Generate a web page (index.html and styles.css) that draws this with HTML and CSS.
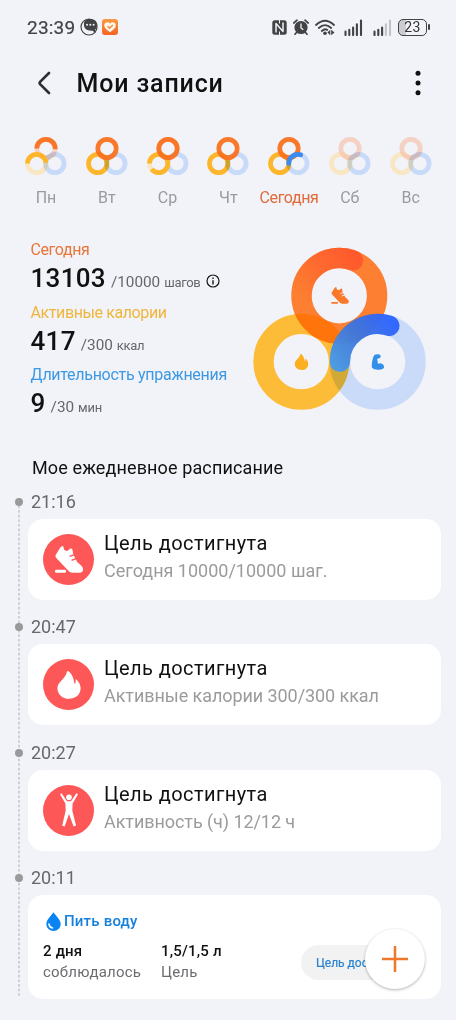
FILE: index.html
```html
<!DOCTYPE html>
<html lang="ru">
<head>
<meta charset="utf-8">
<title>Мои записи</title>
<link rel="stylesheet" href="styles.css">
</head>
<body>
<svg class="defs" width="0" height="0">
  <defs>
    <symbol id="shoe" viewBox="0 0 28 27">
      <path d="M.7 9 5.300 1.600Q6 .6 7.500 0 8.300 0 8.500 1L9 3.600Q10.500 5.200 12.500 4.800 14 4 15.200 2.600 17 2 17.400 3.600L18.300 8.200 14.300 9.800 14.800 11 19 9.500 20.100 12.200 16.300 13.800 16.800 15 21 13.500 22.200 16 26.400 19.800Q28.300 21.800 28 24 27.500 26.700 24.500 26.800L17.500 26.700Q15 26.600 13.400 24.800L1.300 12Q0 10.500.7 9Z"/>
      <rect x="0" y="23.700" width="11" height="3" rx="1.200"/>
    </symbol>
    <symbol id="flame" viewBox="0 0 24 28">
      <path d="M11.600.3C13.800 2 16.500 5.500 17.200 11.500 17.400 13.300 18.300 13.200 18.500 11.800L18.800 8C22.300 11 23.600 14.200 23.600 17.300 23.600 23.700 18.500 27.800 12 27.800 5.500 27.800.4 23.400.4 17.200.4 10.800 8.200 8.300 9.800 1.200Q10.200-.5 11.600.3Z"/>
    </symbol>
    <symbol id="arm" viewBox="0 0 13 16">
      <path d="M3.800.6 7.200.2Q9.200.6 9.200 2.300 9.100 4.500 6.800 4.500L5.700 4.700 6.500 9.800Q8.500 8.700 10.500 9.700 12.800 11 12.600 13.200 12 15.200 7.500 15.700 2.500 16 .5 13.800-.4 12.500 1 6 1.800 1.500 3.800.6Z"/>
    </symbol>
    <symbol id="rings" viewBox="0 0 44 42">
      <circle class="base-y" cx="12.700" cy="27.500" r="9.200"/>
      <circle class="base-o" cx="22" cy="12.500" r="9.200"/>
      <circle class="base-b" cx="30.900" cy="27.500" r="9.200"/>
    </symbol>
    <linearGradient id="lap" gradientUnits="userSpaceOnUse" x1="52" y1="60" x2="108" y2="20">
      <stop offset="0" stop-color="#ff6a2c" stop-opacity="0"/><stop offset=".5" stop-color="#ff652f" stop-opacity=".8"/><stop offset="1" stop-color="#ff5a2c"/>
    </linearGradient>
    <linearGradient id="blue" gradientUnits="userSpaceOnUse" x1="90" y1="130" x2="146" y2="84">
      <stop offset="0" stop-color="#479bea"/><stop offset=".5" stop-color="#4077db"/><stop offset="1" stop-color="#2c64ff"/>
    </linearGradient>
    <linearGradient id="app" x1="0" y1="0" x2="0" y2="1">
      <stop offset="0" stop-color="#fa9a43"/><stop offset="1" stop-color="#f26322"/>
    </linearGradient>
  </defs>
</svg>
<main class="screen">
  <div class="status">
    <span class="clock">23:39</span>
    <svg class="chat" width="18" height="18" viewBox="0 0 18 18"><circle cx="9" cy="9" r="8" fill="none" stroke="#434346" stroke-width="1.200"/><path d="M5 2.500C7 .3 13 .3 15.500 2.800 17.800 5 17.800 9 15.300 11.500L15.500 15 12.500 12.800Q6.500 13 4.500 9.600 3 5.500 5 2.500Z" fill="#434346"/><g fill="#f1f3f8"><circle cx="7" cy="6.800" r="1"/><circle cx="10.300" cy="6.800" r="1"/><circle cx="13.600" cy="6.800" r="1"/></g></svg>
    <svg class="app" width="16" height="16" viewBox="0 0 16 16"><rect width="16" height="16" rx="3" fill="url(#app)"/><path d="M8 13.300C4 10.500 2.200 8.600 2.200 6.300 2.200 3.200 6 2.200 8 4.500 10 2.200 13.800 3.200 13.800 6.300 13.800 8.600 12 10.500 8 13.300Z" fill="#fff6e6"/><path d="m5.600 7.300 2 2 3.200-3.300" fill="none" stroke="#f0873a" stroke-width="1.300"/></svg>
    <svg class="nfc" width="15" height="15" viewBox="0 0 15 15"><rect x=".3" y=".3" width="14.400" height="14.400" rx="2.500" fill="#434346"/><path d="M4 12.600V3.600L11 11.400V2.400" fill="none" stroke="#f1f3f8" stroke-width="1.500" stroke-linejoin="round"/><path d="M7.500 0v3.500M7.500 11.500V15" stroke="#f1f3f8" stroke-width="1"/></svg>
    <svg class="alarm" width="16" height="16" viewBox="0 0 16 16"><circle cx="8" cy="8.500" r="6.600" fill="#434346"/><path d="M.8 4 4 1.200M15.200 4 12 1.200M3.500 13.500 2 15.300M12.500 13.500 14 15.300" stroke="#434346" stroke-width="1.700" stroke-linecap="round"/><path d="M8 4.500V9l2.300 1.800" fill="none" stroke="#f1f3f8" stroke-width="1.300"/></svg>
    <svg class="wifi" width="20" height="17" viewBox="0 0 20 17"><g fill="none" stroke="#434346" stroke-width="1.800" stroke-linecap="round"><path d="M1 6Q10-2.500 19 6M3.800 9Q10 3.200 16.200 9M6.800 12Q10 9 12.300 11"/></g><circle cx="10" cy="14.300" r="1.800" fill="#434346"/><path d="M15.300 10.800v5.400L12.400 13.500ZM16.200 10.800v5.400L19.500 13.500Z" fill="#434346"/></svg>
    <svg class="sig1" width="19" height="17" viewBox="0 0 19 17"><path d="M1.500 12.500V16M5.300 10.800V16M9.100 8.600V16M12.900 5.400V16M17 1.500V16" stroke="#434346" stroke-width="2.100" stroke-linecap="round"/></svg>
    <svg class="sig2" width="19" height="17" viewBox="0 0 19 17"><g stroke="#434346" stroke-width="2.100" stroke-linecap="round"><path d="M1.500 12.500V16M5.300 10.800V16M9.100 8.600V16"/><path d="M12.900 5.400V16M17 1.500V16" stroke="#c3c1ca"/></g></svg>
    <span class="battery"><span class="level">23</span></span>
  </div>

  <header class="top">
    <svg class="back" width="14" height="24" viewBox="0 0 14 24"><path d="M12 2 3.300 10.600Q2 12 3.300 13.400L12 22" fill="none" stroke="#2f2f33" stroke-width="2.700" stroke-linecap="round"/></svg>
    <h1>Мои записи</h1>
    <svg class="more" width="6" height="26" viewBox="0 0 6 26"><circle cx="3" cy="3.200" r="2.500"/><circle cx="3" cy="13" r="2.500"/><circle cx="3" cy="22.800" r="2.500"/></svg>
  </header>

  <nav class="week">
    <div class="day"><svg class="mini" viewBox="0 0 44 42"><use href="#rings"/><circle class="arc y" pathLength="100" stroke-dasharray="49 200" transform="rotate(180 12.700 27.500)" cx="12.700" cy="27.500" r="9.200"/><circle class="arc o" pathLength="100" stroke-dasharray="51 200" transform="rotate(180 22 12.500)" cx="22" cy="12.500" r="9.200"/></svg><span>Пн</span></div>
    <div class="day"><svg class="mini" viewBox="0 0 44 42"><circle class="arc y" cx="12.700" cy="27.500" r="9.200"/><circle class="base-b" cx="30.900" cy="27.500" r="9.200"/><circle class="arc o" cx="22" cy="12.500" r="9.200"/></svg><span>Вт</span></div>
    <div class="day"><svg class="mini" viewBox="0 0 44 42"><use href="#rings"/><circle class="arc y" pathLength="100" stroke-dasharray="89 200" transform="rotate(180 12.700 27.500)" cx="12.700" cy="27.500" r="9.200"/><circle class="arc o" cx="22" cy="12.500" r="9.200"/></svg><span>Ср</span></div>
    <div class="day"><svg class="mini" viewBox="0 0 44 42"><circle class="arc y" cx="12.700" cy="27.500" r="9.200"/><circle class="base-b" cx="30.900" cy="27.500" r="9.200"/><circle class="arc o" cx="22" cy="12.500" r="9.200"/></svg><span>Чт</span></div>
    <div class="day today"><svg class="mini" viewBox="0 0 44 42"><circle class="arc y" cx="12.700" cy="27.500" r="9.200"/><circle class="base-b" cx="30.900" cy="27.500" r="9.200"/><circle class="arc o" cx="22" cy="12.500" r="9.200"/><circle class="arc b" pathLength="100" stroke-dasharray="30 200" transform="rotate(180 30.900 27.500)" cx="30.900" cy="27.500" r="9.200"/></svg><span>Сегодня</span></div>
    <div class="day"><svg class="mini" viewBox="0 0 44 42"><use href="#rings"/></svg><span>Сб</span></div>
    <div class="day"><svg class="mini" viewBox="0 0 44 42"><use href="#rings"/></svg><span>Вс</span></div>
  </nav>

  <section class="summary">
    <div class="metrics">
      <div class="metric steps"><div class="name">Сегодня</div><div class="value"><b>13103</b><span class="goal">/10000</span><span class="unit">шагов</span><svg class="info" width="14" height="14" viewBox="0 0 14 14"><circle cx="7" cy="7" r="6" fill="none" stroke="#151515" stroke-width="1.200"/><path d="M7 6.200v4.300M7 3.500v1.400" stroke="#151515" stroke-width="1.400"/></svg></div></div>
      <div class="metric cal"><div class="name">Активные калории</div><div class="value"><b>417</b><span class="goal">/300</span><span class="unit">ккал</span></div></div>
      <div class="metric dur"><div class="name">Длительность упражнения</div><div class="value"><b>9</b><span class="goal">/30</span><span class="unit">мин</span></div></div>
    </div>
    <svg class="big" width="180" height="170" viewBox="0 0 180 170">
      <g fill="none" stroke-width="20.400">
        <circle cx="51.300" cy="118.700" r="37.800" stroke="#fcbc37"/>
        <circle cx="89.300" cy="52.800" r="37.800" stroke="#ff6200" stroke-opacity=".8"/>
        <circle cx="127.700" cy="118.700" r="37.800" class="track"/>
        <path d="M51.500 52.800A37.800 37.800 0 0 1 102.900 17.500" stroke="url(#lap)" stroke-linecap="round"/>
        <path d="M89.900 118.700A37.800 37.800 0 0 1 139.400 82.800" stroke="url(#blue)" stroke-linecap="round" stroke-opacity=".96"/>
      </g>
      <use href="#shoe" x="81" y="44" width="18" height="17" fill="#fa7829"/>
      <use href="#flame" x="44.500" y="110.500" width="14" height="17" fill="#fdb01f"/>
      <use href="#arm" x="121.500" y="111" width="13" height="16" fill="#338fe8"/>
    </svg>
  </section>

  <h2>Мое ежедневное расписание</h2>

  <section class="timeline">
    <svg class="rail" width="2" height="496" viewBox="0 0 2 496"><path d="M1 0V496" stroke="#c0c0c4" stroke-width="1.400" stroke-dasharray="2.600 2"/></svg>
    <article class="entry"><div class="time">21:16</div><div class="card goal-card"><span class="disc"><svg width="28" height="27"><use href="#shoe"/></svg></span><div class="text"><div class="title">Цель достигнута</div><div class="sub s1">Сегодня 10000/10000 шаг.</div></div></div></article>
    <article class="entry"><div class="time">20:47</div><div class="card goal-card"><span class="disc"><svg width="24" height="28"><use href="#flame"/></svg></span><div class="text"><div class="title">Цель достигнута</div><div class="sub s2">Активные калории 300/300 ккал</div></div></div></article>
    <article class="entry"><div class="time">20:27</div><div class="card goal-card"><span class="disc"><svg width="20" height="36" viewBox="0 0 20 36"><circle cx="10" cy="5.200" r="2.800"/><path d="M2.600 1.300 7.600 8.700Q10 9.900 12.400 8.700L17.400 1.300 19 2.200 13.600 11.500 13.300 18.500 17 33.500 14.600 34.500 10 22 5.600 34.500 3.200 33.500 6.700 18.500 6.400 11.500 1 2.200Z"/></svg></span><div class="text"><div class="title">Цель достигнута</div><div class="sub s3">Активность (ч) 12/12 ч</div></div></div></article>
    <article class="entry"><div class="time">20:11</div><div class="card water">
      <div class="water-head"><svg width="15" height="19" viewBox="0 0 15 19"><path d="M7.500.2C9.500 3.500 14.700 7.500 14.700 12A7.200 6.900 0 0 1 .3 12C.3 7.500 5.500 3.500 7.500.2Z" fill="#0b84f3"/><path d="M2.900 12Q3.500 15.500 6.500 16" fill="none" stroke="#fff" stroke-width="1.500" stroke-linecap="round"/></svg><span>Пить воду</span></div>
      <div class="water-row">
        <div class="fact days"><b>2 дня</b><span>соблюдалось</span></div>
        <div class="fact amount"><b>1,5/1,5 л</b><span>Цель</span></div>
        <div class="pill">Цель достигнута</div>
      </div>
    </div></article>
  </section>
  <button class="fab" aria-label="Добавить"><svg width="26" height="26" viewBox="0 0 26 26"><path d="M13 0V26M0 13H26" stroke="#f0762c" stroke-width="2.500"/></svg></button>
</main>
</body>
</html>
```
FILE: styles.css
```css
* { box-sizing: border-box; }
body { margin: 0; background: #f1f3f8; font-family: Roboto, "Noto Sans", sans-serif; color: #111; }
.defs { display: block; }
.screen { position: relative; width: 456px; height: 1020px; overflow: hidden; background: #f1f3f8; }
svg { display: block; flex: none; }

.status { display: flex; align-items: center; height: 54px; padding: 0 26px 0 27px; }
.clock { width: 52.500px; font-size: 19px; letter-spacing: .2px; color: #434346; -webkit-text-stroke: .2px #434346; }
.app { margin-left: 4px; }
.nfc { margin-left: auto; }
.alarm { margin-left: 6px; }
.wifi { margin-left: 6px; }
.sig1 { margin-left: 9px; }
.sig2 { margin-left: 10px; }
.battery { position: relative; width: 29px; height: 17px; margin: 0 3px 0 6px; border: 1.500px solid #434346; border-radius: 5px; background: linear-gradient(90deg, #cbcbd0 27%, #f1f3f8 27%); }
.battery::after { content: ""; position: absolute; right: -4px; top: 4px; width: 2px; height: 6px; border-radius: 1px; background: #434346; }
.level { display: block; font-size: 14px; line-height: 15px; text-align: center; color: #333; letter-spacing: .3px; }

.top { display: flex; align-items: center; height: 58px; padding: 0 35px 0 37px; }
.top h1 { margin: 2px 0 0 25.500px; font-size: 25px; line-height: 30px; font-weight: 500; letter-spacing: .85px; }
.more { margin-left: auto; fill: #111; }

.week { display: grid; grid-template-columns: repeat(7, 1fr); margin: 24px 15px 0 15.600px; height: 73px; }
.day { display: flex; flex-direction: column; align-items: center; font-size: 16px; line-height: 20px; color: #999a9e; white-space: nowrap; }
.mini { width: 44px; height: 42px; margin-bottom: 10px; fill: none; }
.today { color: #e06a38; letter-spacing: -.4px; }
.base-y, .base-o, .base-b, .arc { fill: none; stroke-width: 4.700; }
.base-y { stroke: #f9e6c3; }
.base-o { stroke: #f8bfa6; stroke-opacity: .65; }
.base-b { stroke: #d3e5ff; mix-blend-mode: multiply; }
.arc { stroke-linecap: butt; }
.y { stroke: #fdb52b; }
.o { stroke: #f9711f; stroke-opacity: .95; }
.b { stroke: #3b8cec; stroke-linecap: round; }

.summary { display: flex; justify-content: space-between; margin-top: 30px; height: 190px; padding: 1px 26px 0 30.500px; }
.metric { height: 62.700px; white-space: nowrap; }
.name { font-size: 16px; line-height: 20px; letter-spacing: -.4px; }
.dur .name { letter-spacing: -.28px; }
.steps .name { color: #e8763c; }
.cal .name { color: #f0b63c; }
.dur .name { color: #3d98e3; }
.value { display: flex; align-items: baseline; line-height: 36px; color: #66676b; }
.value b { font-size: 26px; font-weight: 500; color: #111; letter-spacing: .3px; margin-right: 5px; }
.goal { font-size: 15.300px; margin-right: 4px; }
.unit { font-size: 13px; letter-spacing: -.3px; }
.info { margin-left: 5.500px; align-self: center; }
.big { margin: 3px 0 0 0; }
.track { stroke: #d5e6ff; mix-blend-mode: multiply; }

h2 { margin: 28px 0 0 32px; font-size: 18px; line-height: 22px; font-weight: 400; letter-spacing: .12px; }
.timeline { position: relative; padding: 11px 15px 0 28px; }
.rail { position: absolute; left: 18px; top: 22px; }
.entry { height: 125.400px; }
.time { position: relative; height: 29px; padding: 1px 0 0 3px; font-size: 18px; line-height: 22px; color: #66676b; }
.time::before { content: ""; position: absolute; left: -13px; top: 8px; width: 8px; height: 8px; border-radius: 50%; background: #9a9a9d; }
.card { border-radius: 15px; background: #fff; }
.goal-card { display: flex; align-items: center; gap: 10px; height: 81px; padding: 0 15px; }
.disc { display: grid; place-items: center; width: 51px; height: 51px; border-radius: 50%; background: #fd5757; fill: #fff; }
.text { padding-bottom: 6px; }
.title { font-size: 20px; line-height: 26px; letter-spacing: .42px; }
.sub { font-size: 18px; line-height: 24px; margin-top: 3px; color: #9b9b9d; white-space: nowrap; }
.s2, .s3 { letter-spacing: -.07px; }
.water { height: 103.500px; padding: 15.500px 0 0 15px; }
.water-head { display: flex; align-items: center; gap: 3.500px; height: 21px; padding-left: 2.500px; font-size: 15px; font-weight: 500; letter-spacing: .2px; color: #1580dc; }
.water-row { display: flex; height: 50px; padding-top: 9px; }
.fact { display: flex; flex-direction: column; font-size: 15px; line-height: 21px; letter-spacing: .2px; color: #6c6c70; white-space: nowrap; }
.fact b { font-weight: 500; color: #111; }
.days { width: 118px; }
.amount { width: 140px; }
.pill { width: 124px; height: 35px; margin-top: 4px; padding-left: 15px; border-radius: 18px; background: #f2f2f2; color: #2a84cf; font-size: 12px; line-height: 36px; -webkit-text-stroke: .2px #2a84cf; white-space: nowrap; }
.fab { position: absolute; left: 365px; top: 929px; width: 60px; height: 60px; display: grid; place-items: center; padding: 0; border: 0; border-radius: 50%; background: #fff; box-shadow: 0 1px 3px rgba(0,0,0,.3); }
```
